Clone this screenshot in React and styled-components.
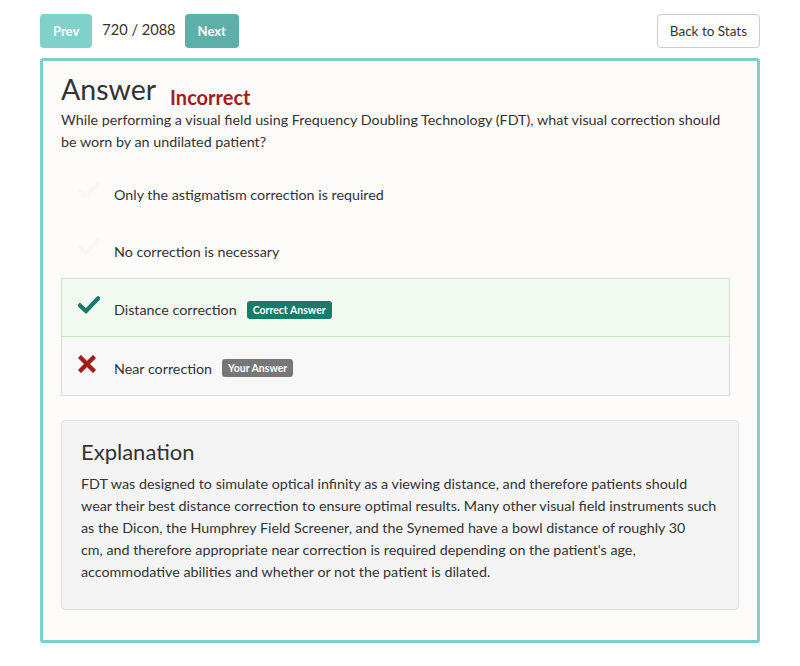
import React from "react";
import styled, { createGlobalStyle } from "styled-components";

const Global = createGlobalStyle`
  html, body { margin: 0; padding: 0; background: #fff; }
  body { font-family: Lato, "Open Sans", sans-serif; color: #333; }
  *, *::before, *::after { box-sizing: border-box; }
`;

const Page = styled.div`
  padding: 14px 40px 20px;
`;

const Toolbar = styled.div`
  display: flex;
  align-items: center;
  height: 34px;
  margin-bottom: 10px;
`;

const NavButton = styled.button`
  font-family: inherit;
  font-weight: 700;
  font-size: 13px;
  color: #fff;
  border: none;
  border-radius: 4px;
  height: 34px;
  padding: 0 ${(p) => p.$pad}px;
  background: ${(p) => (p.$disabled ? "#80d0cc" : "#5eaeaa")};
  cursor: pointer;
`;

const Counter = styled.span`
  font-size: 14.6px;
  color: #333;
  margin: -3px 9px 0 10px;
`;

const Spacer = styled.div`flex: 1;`;

const BackButton = styled.button`
  font-family: inherit;
  font-size: 13.5px;
  color: #333;
  background: #fff;
  border: 1px solid #ccc;
  border-radius: 4px;
  height: 34px;
  padding: 0 12px;
`;

const Panel = styled.div`
  border: 3px solid #7ecfcb;
  border-radius: 3px;
  background: #fdfcfa;
  padding: 8px 18px 30px;
`;

const TitleRow = styled.div`
  display: flex;
  align-items: flex-end;
  gap: 14px;
`;

const Title = styled.h1`
  margin: 0;
  font-size: 28.5px;
  font-weight: 400;
  color: #333;
  line-height: 40px;
`;

const Status = styled.span`
  font-size: 20px;
  font-weight: 700;
  color: #a21c1c;
  line-height: 28px;
  margin-bottom: -2px;
`;

const Question = styled.p`
  margin: 0 0 11px;
  font-size: 14.3px;
  line-height: 22px;
  color: #333;
`;

const Options = styled.div`
  display: flex;
  flex-direction: column;
  margin-right: 9px;
`;

const Option = styled.div`
  display: flex;
  align-items: center;
  height: ${(p) => (p.$state ? 59 : 57)}px;
  padding: 4px 0 0 16px;
  border: 1px solid ${(p) => (p.$state === "correct" ? "#c9e6c0" : p.$state === "wrong" ? "#dcdcdc" : "transparent")};
  border-top-width: ${(p) => (p.$state === "wrong" ? 0 : 1)}px;
  background: ${(p) => (p.$state === "correct" ? "#f2f9f1" : p.$state === "wrong" ? "#f8f8f8" : "transparent")};
  font-size: 14.3px;
  color: #333;
`;

const IconBox = styled.span`
  width: 36px;
  display: flex;
  align-items: center;
  margin-top: -9px;
`;

const Badge = styled.span`
  margin-left: 10px;
  font-size: 10.5px;
  font-weight: 700;
  color: #fff;
  background: ${(p) => (p.$kind === "correct" ? "#187a68" : "#777")};
  border-radius: 3px;
  padding: 3px 6px;
  line-height: 12px;
`;

const Explanation = styled.div`
  margin-top: 24px;
  background: #f4f4f4;
  border: 1px solid #e0e0e0;
  border-radius: 4px;
  padding: 16px 19px 26px;
`;

const ExplTitle = styled.h2`
  margin: 0 0 6px;
  font-size: 22px;
  font-weight: 400;
  color: #333;
  line-height: 30px;
`;

const ExplText = styled.p`
  margin: 0;
  font-size: 14.3px;
  line-height: 22px;
  color: #333;
`;

const Check = ({ color }) => (
  <svg width="22" height="18" viewBox="0 0 22 18">
    <path d="M2 9.5 L8 15 L20 2.5" fill="none" stroke={color} strokeWidth="4.2" strokeLinecap="square" strokeLinejoin="miter" />
  </svg>
);

const Cross = () => (
  <svg width="18" height="18" viewBox="0 0 18 18">
    <path d="M3 3 L15 15 M15 3 L3 15" fill="none" stroke="#a21c1c" strokeWidth="4.4" strokeLinecap="square" />
  </svg>
);

const options = [
  { text: "Only the astigmatism correction is required" },
  { text: "No correction is necessary" },
  { text: "Distance correction", state: "correct", badge: "Correct Answer" },
  { text: "Near correction", state: "wrong", badge: "Your Answer" },
];

export default function App() {
  return (
    <Page>
      <Global />
      <Toolbar>
        <NavButton $disabled $pad={13}>Prev</NavButton>
        <Counter>720 / 2088</Counter>
        <NavButton $pad={13}>Next</NavButton>
        <Spacer />
        <BackButton>Back to Stats</BackButton>
      </Toolbar>
      <Panel>
        <TitleRow>
          <Title>Answer</Title>
          <Status>Incorrect</Status>
        </TitleRow>
        <Question>
          While performing a visual field using Frequency Doubling Technology (FDT), what visual correction should be worn by an undilated patient?
        </Question>
        <Options>
          {options.map((o) => (
            <Option key={o.text} $state={o.state}>
              <IconBox>
                {o.state === "wrong" ? <Cross /> : <Check color={o.state === "correct" ? "#187a68" : "#f9f8f6"} />}
              </IconBox>
              {o.text}
              {o.badge && <Badge $kind={o.state}>{o.badge}</Badge>}
            </Option>
          ))}
        </Options>
        <Explanation>
          <ExplTitle>Explanation</ExplTitle>
          <ExplText>
            FDT was designed to simulate optical infinity as a viewing distance, and therefore patients should wear their best distance correction to ensure optimal results. Many other visual field instruments such as the Dicon, the Humphrey Field Screener, and the Synemed have a bowl distance of roughly 30<br />cm, and therefore appropriate near correction is required depending on the patient's age, accommodative abilities and whether or not the patient is dilated.
          </ExplText>
        </Explanation>
      </Panel>
    </Page>
  );
}
